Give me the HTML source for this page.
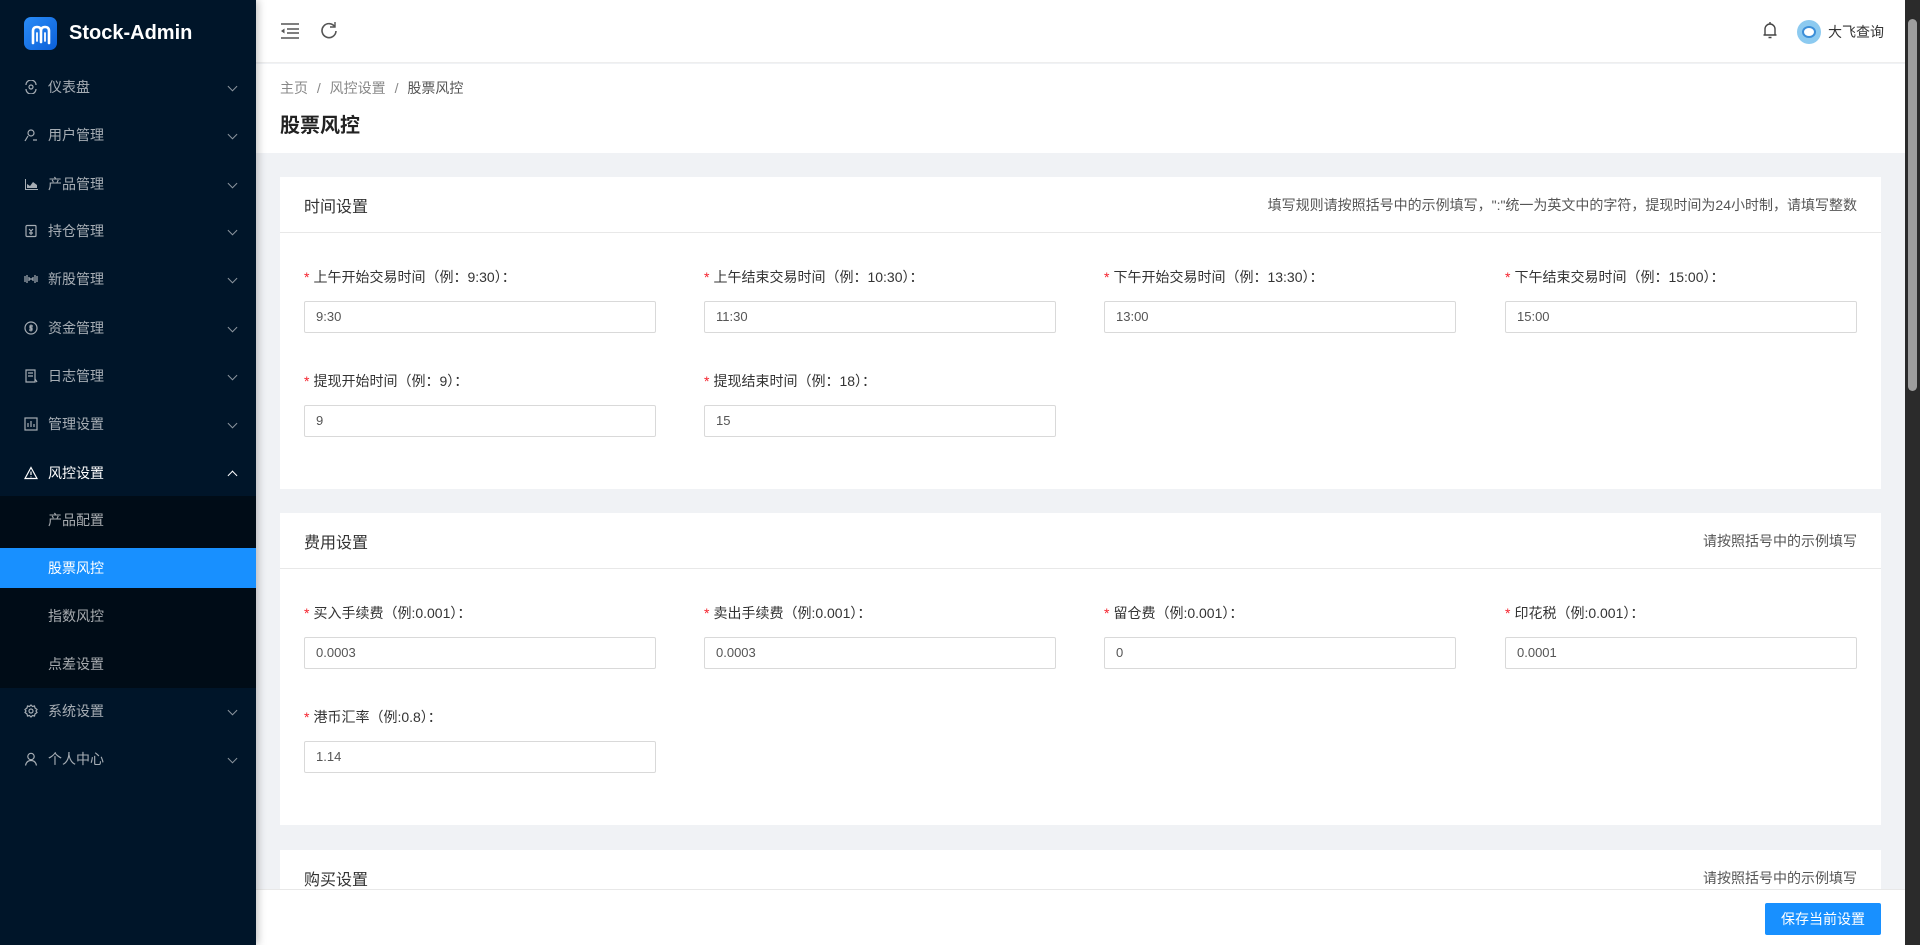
<!DOCTYPE html>
<html><head><meta charset="utf-8"><style>
*{box-sizing:border-box;margin:0;padding:0}
body{width:1920px;height:945px;overflow:hidden;position:relative;background:#f0f2f5;font-family:"Liberation Sans","Noto Sans CJK SC",sans-serif;font-size:14px;color:#333}
.side{position:absolute;left:0;top:0;width:256px;height:945px;background:#001529;color:rgba(255,255,255,.65);box-shadow:2px 0 8px rgba(0,0,0,.25);z-index:2}
.logo{position:absolute;left:24px;top:17px;display:flex;align-items:center}
.logo .ic{width:33px;height:33px;border-radius:7px;background:linear-gradient(135deg,#2a8cf7,#0b5fd8);display:flex;align-items:center;justify-content:center}
.logo span{color:#fff;font-weight:bold;font-size:20px;margin-left:12px}
.mi{position:absolute;left:0;width:256px;height:40px;display:flex;align-items:center;padding-left:24px}
.mi svg.i{width:14px;height:14px;margin-right:10px}
.mi .ch{position:absolute;right:20px;top:16px;width:7px;height:7px;border-right:1.5px solid rgba(255,255,255,.55);border-bottom:1.5px solid rgba(255,255,255,.55);transform:rotate(45deg)}
.mi .up{transform:rotate(-135deg);top:19px;border-color:#fff}
.sub{position:absolute;left:0;top:496px;width:256px;height:192px;background:#000c17}
.si{position:absolute;left:0;width:256px;height:40px;line-height:40px;padding-left:48px}
.act{background:#1890ff;color:#fff}
.top{position:absolute;left:256px;top:0;width:1649px;height:63px;background:#fff;border-bottom:1px solid #eee}
.ph{position:absolute;left:256px;top:64px;width:1649px;height:89px;background:#fff}
.card{position:absolute;left:280px;width:1601px;background:#fff}
.ct{height:56px;border-bottom:1px solid #e8e8e8;display:flex;align-items:center;justify-content:space-between;padding:0 24px;font-size:16px;color:#333}
.ct small{font-size:14px;color:#555}
.f{position:absolute}
.f label{display:block;font-size:14px;color:#333;height:20px}
.f label b{color:#f5222d;font-weight:normal;margin-right:4px}
.f .in{margin-top:14px;width:352px;height:32px;border:1px solid #d9d9d9;border-radius:2px;padding-left:11px;line-height:30px;font-size:13px;color:#555}
.foot{position:absolute;left:256px;top:889px;width:1649px;height:56px;background:#fff;border-top:1px solid #e8e8e8}
.btn{position:absolute;left:1765px;top:903px;width:116px;height:32px;background:#1890ff;color:#fff;border-radius:2px;text-align:center;line-height:32px;font-size:14px}
.sb{position:absolute;left:1905px;top:0;width:15px;height:945px;background:#2b2b2b}
.sb .th{position:absolute;left:3px;top:19px;width:9px;height:372px;background:#9e9e9e;border-radius:5px}
</style></head><body>
<div class="side">
<div class="logo"><div class="ic"><svg width="22" height="22" viewBox="0 0 22 22" fill="none" stroke="#fff" stroke-width="2.6" stroke-linecap="round"><path d="M3 20V8q0-4 4-4t4 4v11M11 8q0-4 4-4t4 4v12"/><path d="M7 10v8M15 10v8" stroke-width="1.8"/></svg></div><span>Stock-Admin</span></div>
<div class="mi" style="top:67px"><svg class="i" viewBox="0 0 14 14" fill="none" stroke="currentColor" stroke-width="1.2"><path d="M2 5a5 5 0 0 1 10 0M2 9a5 5 0 0 0 10 0"/><circle cx="7" cy="7" r="2"/></svg>仪表盘<i class="ch"></i></div>
<div class="mi" style="top:115px"><svg class="i" viewBox="0 0 14 14" fill="none" stroke="currentColor" stroke-width="1.2"><circle cx="7" cy="5" r="3"/><path d="M1 13l3-5M9 12h4"/></svg>用户管理<i class="ch"></i></div>
<div class="mi" style="top:164px"><svg class="i" viewBox="0 0 14 14" fill="currentColor"><path d="M1 2h1v10h12v1H1zM3 11V7l3 2 3-4 4 3v3z"/></svg>产品管理<i class="ch"></i></div>
<div class="mi" style="top:211px"><svg class="i" viewBox="0 0 14 14" fill="none" stroke="currentColor" stroke-width="1.2"><rect x="2" y="1.5" width="10" height="11" rx="1"/><path d="M5 5l2 2 2-2M7 7v4M5 9h4"/></svg>持仓管理<i class="ch"></i></div>
<div class="mi" style="top:259px"><svg class="i" viewBox="0 0 14 14" fill="none" stroke="currentColor" stroke-width="1.2"><path d="M1 4v6M3 3v8M5 5v4M9 5v4M11 3v8M13 4v6M5 7h4"/></svg>新股管理<i class="ch"></i></div>
<div class="mi" style="top:308px"><svg class="i" viewBox="0 0 14 14" fill="none" stroke="currentColor" stroke-width="1.2"><circle cx="7" cy="7" r="6"/><path d="M9 5H6v2h2v2H5M7 3.5v7"/></svg>资金管理<i class="ch"></i></div>
<div class="mi" style="top:356px"><svg class="i" viewBox="0 0 14 14" fill="none" stroke="currentColor" stroke-width="1.2"><path d="M2 1h9v12H2zM4 4h5M4 7h5M11 10l2 3"/></svg>日志管理<i class="ch"></i></div>
<div class="mi" style="top:404px"><svg class="i" viewBox="0 0 14 14" fill="none" stroke="currentColor" stroke-width="1.2"><rect x="1" y="1" width="12" height="12"/><path d="M4 10V6M7 10V4M10 10V7"/></svg>管理设置<i class="ch"></i></div>
<div class="mi" style="top:453px;color:#fff"><svg class="i" viewBox="0 0 14 14" fill="none" stroke="currentColor" stroke-width="1.2"><path d="M7 1.5L13 12.5H1z M7 5.5v3.5M7 10.5v.8"/></svg>风控设置<i class="ch up"></i></div>
<div class="sub"></div>
<div class="si" style="top:500px">产品配置</div>
<div class="si act" style="top:548px">股票风控</div>
<div class="si" style="top:596px">指数风控</div>
<div class="si" style="top:644px">点差设置</div>
<div class="mi" style="top:691px"><svg class="i" viewBox="0 0 14 14" fill="none" stroke="currentColor" stroke-width="1.2"><circle cx="7" cy="7" r="2"/><path d="M7 1l1.5 1.5 2-.5.5 2L13 5.5 12 7l1 1.5-2 1.5-.5 2-2-.5L7 13l-1.5-1.5-2 .5-.5-2L1 8.5 2 7 1 5.5 3 4l.5-2 2 .5z"/></svg>系统设置<i class="ch"></i></div>
<div class="mi" style="top:739px"><svg class="i" viewBox="0 0 14 14" fill="none" stroke="currentColor" stroke-width="1.2"><circle cx="7" cy="4.5" r="3.2"/><path d="M1.5 13.5q1-5 5.5-5t5.5 5"/></svg>个人中心<i class="ch"></i></div>
</div>
<div class="top">
<svg style="position:absolute;left:24px;top:22px" width="20" height="18" viewBox="0 0 20 18" fill="none" stroke="#555" stroke-width="1.6"><path d="M1 2h18M7 7h12M7 11h12M1 16h18"/><path d="M1 9l3.5-2.5v5z" fill="#555" stroke="none"/></svg>
<svg style="position:absolute;left:64px;top:21px" width="18" height="18" viewBox="0 0 18 18" fill="none" stroke="#555" stroke-width="1.6"><path d="M15 6A7 7 0 1 0 16 10"/><path d="M15 1v5h-5" stroke-width="1.4"/></svg>
<svg style="position:absolute;left:1506px;top:21px" width="16" height="19" viewBox="0 0 16 19" fill="none" stroke="#444" stroke-width="1.4"><path d="M3 14V8a5 5 0 0 1 10 0v6h1.5H1.5zM8 1v2M6.5 16.5h3"/></svg>
<div style="position:absolute;left:1541px;top:20px;width:24px;height:24px;border-radius:50%;background:#8ccaf0"><div style="position:absolute;left:5px;top:6px;width:14px;height:12px;border-radius:50%;background:#fff;border:2px solid #3d8fd8"></div></div>
<div style="position:absolute;left:1572px;top:22px;font-size:14px;color:#333">大飞查询</div>
</div>
<div class="ph">
<div style="position:absolute;left:24px;top:14px;font-size:14px;color:#888">主页 <span style="margin:0 5px">/</span> 风控设置 <span style="margin:0 5px">/</span> <span style="color:#555">股票风控</span></div>
<div style="position:absolute;left:24px;top:45px;font-size:20px;font-weight:bold;color:#222">股票风控</div>
</div>

<div class="card" style="top:177px;height:312px">
<div class="ct">时间设置<small>填写规则请按照括号中的示例填写，":"统一为英文中的字符，提现时间为24小时制，请填写整数</small></div>
<div class="f" style="left:24px;top:90px"><label><b>*</b>上午开始交易时间（例：9:30）：</label><div class="in">9:30</div></div>
<div class="f" style="left:424px;top:90px"><label><b>*</b>上午结束交易时间（例：10:30）：</label><div class="in">11:30</div></div>
<div class="f" style="left:824px;top:90px"><label><b>*</b>下午开始交易时间（例：13:30）：</label><div class="in">13:00</div></div>
<div class="f" style="left:1225px;top:90px"><label><b>*</b>下午结束交易时间（例：15:00）：</label><div class="in">15:00</div></div>
<div class="f" style="left:24px;top:194px"><label><b>*</b>提现开始时间（例：9）：</label><div class="in">9</div></div>
<div class="f" style="left:424px;top:194px"><label><b>*</b>提现结束时间（例：18）：</label><div class="in">15</div></div>
</div>

<div class="card" style="top:513px;height:312px">
<div class="ct">费用设置<small>请按照括号中的示例填写</small></div>
<div class="f" style="left:24px;top:90px"><label><b>*</b>买入手续费（例:0.001）：</label><div class="in">0.0003</div></div>
<div class="f" style="left:424px;top:90px"><label><b>*</b>卖出手续费（例:0.001）：</label><div class="in">0.0003</div></div>
<div class="f" style="left:824px;top:90px"><label><b>*</b>留仓费（例:0.001）：</label><div class="in">0</div></div>
<div class="f" style="left:1225px;top:90px"><label><b>*</b>印花税（例:0.001）：</label><div class="in">0.0001</div></div>
<div class="f" style="left:24px;top:194px"><label><b>*</b>港币汇率（例:0.8）：</label><div class="in">1.14</div></div>
</div>

<div class="card" style="top:850px;height:60px">
<div class="ct">购买设置<small>请按照括号中的示例填写</small></div>
</div>
<div class="foot"></div>
<div class="btn">保存当前设置</div>
<div class="sb"><div class="th"></div></div>
</body></html>
